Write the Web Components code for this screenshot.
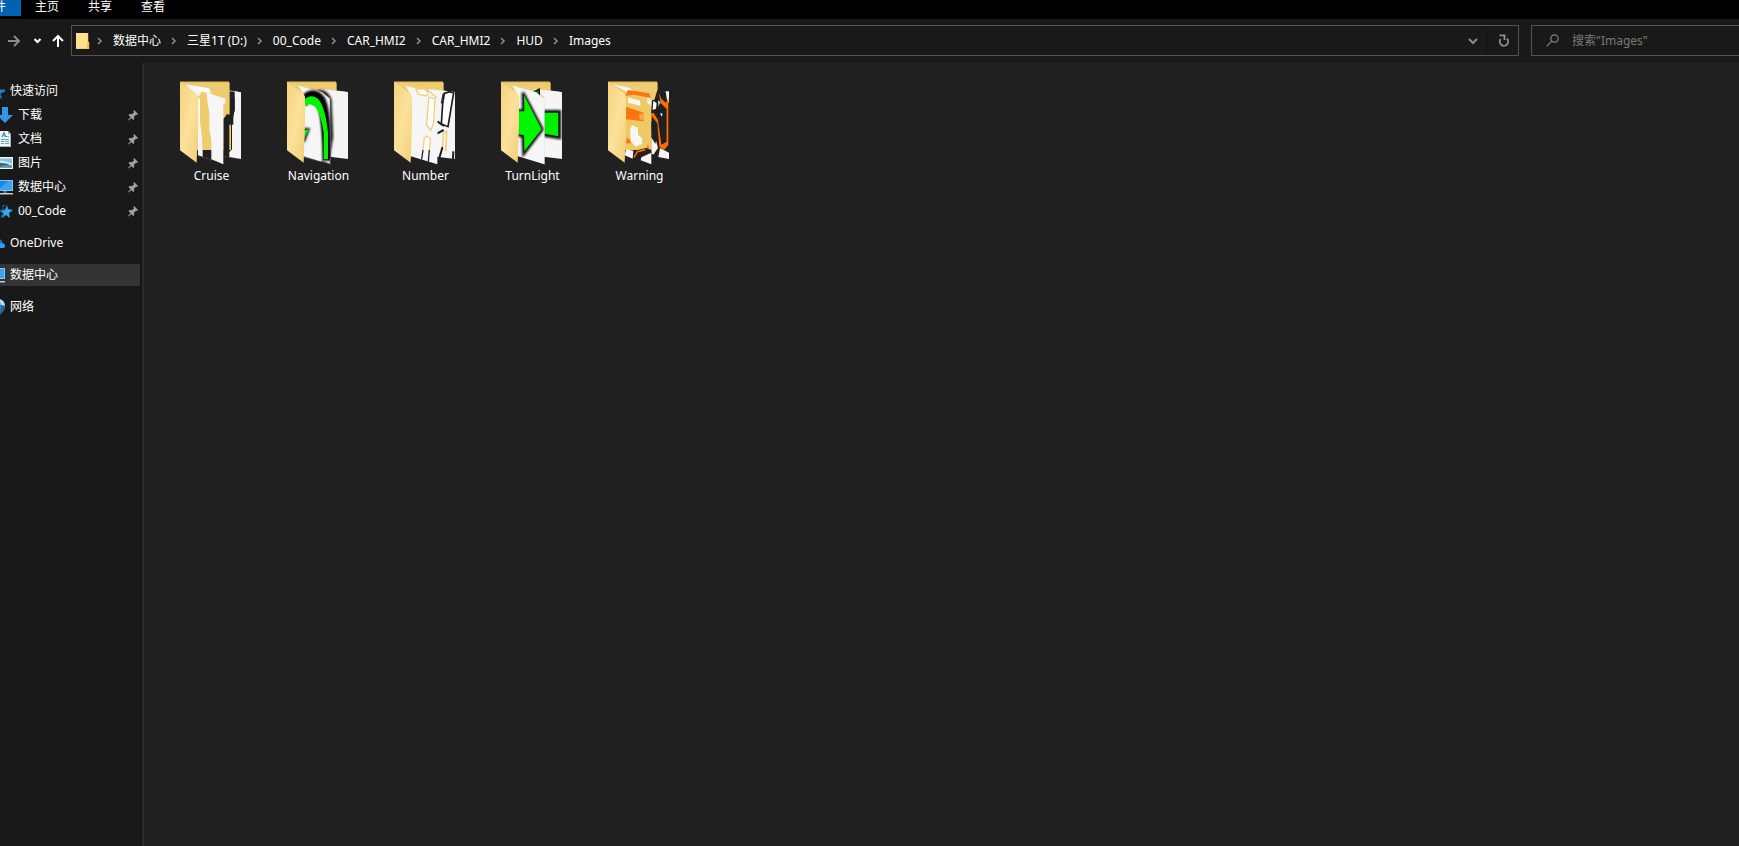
<!DOCTYPE html>
<html lang="zh-CN">
<head>
<meta charset="utf-8">
<title>Images</title>
<style>
  body {
    margin: 0;
    background: #191919;
    color: #fff;
    font-family: "Noto Sans", "Noto Sans CJK SC", sans-serif;
    font-size: 12px;
    line-height: 16px;
  }
</style>
</head>
<body>
<explorer-window>
  <ribbon-tabs slot="ribbon">
    <ribbon-tab active>文件</ribbon-tab>
    <ribbon-tab>主页</ribbon-tab>
    <ribbon-tab>共享</ribbon-tab>
    <ribbon-tab>查看</ribbon-tab>
  </ribbon-tabs>
  <address-bar slot="address">
    <path-crumb>数据中心</path-crumb>
    <path-crumb>三星1T (D:)</path-crumb>
    <path-crumb>00_Code</path-crumb>
    <path-crumb>CAR_HMI2</path-crumb>
    <path-crumb>CAR_HMI2</path-crumb>
    <path-crumb>HUD</path-crumb>
    <path-crumb>Images</path-crumb>
  </address-bar>
  <search-box slot="address" folder="Images"></search-box>
  <nav-group slot="side">
    <nav-item icon="star">快速访问</nav-item>
    <nav-item icon="download" pinned>下载</nav-item>
    <nav-item icon="document" pinned>文档</nav-item>
    <nav-item icon="picture" pinned>图片</nav-item>
    <nav-item icon="pc" pinned>数据中心</nav-item>
    <nav-item icon="codestar" pinned>00_Code</nav-item>
  </nav-group>
  <nav-group slot="side"><nav-item icon="cloud">OneDrive</nav-item></nav-group>
  <nav-group slot="side"><nav-item icon="pc" selected>数据中心</nav-item></nav-group>
  <nav-group slot="side"><nav-item icon="network">网络</nav-item></nav-group>
  <folder-tile art="cruise">Cruise</folder-tile>
  <folder-tile art="navigation">Navigation</folder-tile>
  <folder-tile art="number">Number</folder-tile>
  <folder-tile art="turnlight">TurnLight</folder-tile>
  <folder-tile art="warning">Warning</folder-tile>
</explorer-window>

<script>
const RESET = `
  button, a, input {
    font: inherit;
    color: inherit;
    background: none;
    border: 0;
    margin: 0;
    padding: 0;
    text-decoration: none;
    white-space: nowrap;
  }
  svg { display: block; flex: none; }
`;

class ExplorerWindow extends HTMLElement {
  constructor() {
    super();
    this.attachShadow({ mode: "open" });
  }
  connectedCallback() {
    this.shadowRoot.innerHTML = `
      <style>
        :host { display: flex; flex-direction: column; min-height: 100vh; overflow: hidden; }
        .address { display: flex; gap: 12px; padding: 6px 0 7px; }
        .body { display: flex; flex: 1; }
        aside { flex: none; width: 142px; padding-top: 16px; box-sizing: border-box; border-right: 1px solid #141414; }
        aside ::slotted(*) { margin-bottom: 8px; }
        main {
          flex: 1;
          display: flex;
          flex-wrap: wrap;
          align-content: flex-start;
          padding: 15px 14px;
          background: #202020;
          border-left: 2px solid #2b2b2b;
        }
      </style>
      <slot name="ribbon"></slot>
      <div class="address"><slot name="address"></slot></div>
      <div class="body">
        <aside><slot name="side"></slot></aside>
        <main><slot></slot></main>
      </div>`;
  }
}
customElements.define("explorer-window", ExplorerWindow);

class RibbonTabs extends HTMLElement {
  constructor() {
    super();
    this.attachShadow({ mode: "open" });
  }
  connectedCallback() {
    this.shadowRoot.innerHTML = `
      <style>
        :host { display: block; background: #000; padding-bottom: 3px; }
        nav { display: flex; margin-left: -32px; }
      </style>
      <nav><slot></slot></nav>`;
  }
}
customElements.define("ribbon-tabs", RibbonTabs);

class RibbonTab extends HTMLElement {
  constructor() {
    super();
    this.attachShadow({ mode: "open" });
  }
  connectedCallback() {
    this.shadowRoot.innerHTML = `
      <style>
        ${RESET}
        :host { display: block; }
        button { display: block; height: 16px; padding: 0 15px 3px 14px; line-height: 13px; }
        :host([active]) button { background: #0063b1; }
      </style>
      <button type="button"><slot></slot></button>`;
  }
}
customElements.define("ribbon-tab", RibbonTab);

class AddressBar extends HTMLElement {
  constructor() {
    super();
    this.attachShadow({ mode: "open" });
  }
  connectedCallback() {
    this.shadowRoot.innerHTML = `
      <style>
        ${RESET}
        :host { display: flex; flex: 1; min-width: 0; }
        .history { display: flex; align-items: center; flex: none; width: 71px; }
        .history button:nth-child(1) { margin-left: 7px; }
        .history button:nth-child(2) { margin-left: 13px; }
        .history button:nth-child(3) { margin-left: 11px; }
        .field {
          flex: 1;
          display: flex;
          align-items: center;
          height: 29px;
          border: 1px solid #535353;
        }
        .folder { margin: 0 0 0 4px; }
        .crumbs { display: flex; flex: 1; }
        .drop { margin-right: 9px; }
        .refresh { height: 100%; padding: 0 8px 0 10px; border-left: 1px solid #141414; }
      </style>
      <div class="history">
        <button type="button" aria-label="前进">
          <svg width="14" height="12" viewBox="0 0 14 12" fill="none" stroke="#8b8b8b" stroke-width="2"><path d="M1 6h11M7 1l5 5-5 5"/></svg>
        </button>
        <button type="button" aria-label="最近位置">
          <svg width="7" height="6" viewBox="0 0 7 6" fill="none" stroke="#fff" stroke-width="2"><path d="M.5 1l3 3 3-3"/></svg>
        </button>
        <button type="button" aria-label="上移">
          <svg width="12" height="14" viewBox="0 0 12 14" fill="none" stroke="#fff" stroke-width="2"><path d="M6 13V2M1 7l5-5 5 5"/></svg>
        </button>
      </div>
      <div class="field">
        <svg class="folder" width="14" height="16" viewBox="0 0 14 16">
          <path d="M0 0h12v9h1v7H0z" fill="#ffe08c"/>
          <path d="M12 0v10h-1v6h2V9h-1M0 15.5h12" fill="#eec35b" stroke="#eec35b" stroke-width=".5"/>
        </svg>
        <div class="crumbs"><slot></slot></div>
        <button class="drop" type="button" aria-label="以前的位置">
          <svg width="10" height="8" viewBox="0 0 10 8" fill="none" stroke="#8b8b8b" stroke-width="2"><path d="M1 2l4 4 4-4"/></svg>
        </button>
        <button class="refresh" type="button" aria-label="刷新">
          <svg width="12" height="13" viewBox="0 0 12 13" fill="none" stroke="#8f8f8f" stroke-width="1.800"><path d="M9 4.600A4.200 4.200 0 1 1 2.600 5M1.500 1.400H6.500V6"/></svg>
        </button>
      </div>`;
  }
}
customElements.define("address-bar", AddressBar);

class PathCrumb extends HTMLElement {
  constructor() {
    super();
    this.attachShadow({ mode: "open" });
  }
  connectedCallback() {
    this.shadowRoot.innerHTML = `
      <style>
        ${RESET}
        :host { display: flex; align-items: center; }
        svg { margin: 0 10px; }
        :host(:first-child) svg { margin-left: 7px; }
      </style>
      <svg width="6" height="8" viewBox="0 0 6 8" fill="none" stroke="#8b8b8b" stroke-width="1.600"><path d="M1 1l3 3-3 3"/></svg>
      <button type="button"><slot></slot></button>`;
  }
}
customElements.define("path-crumb", PathCrumb);

class SearchBox extends HTMLElement {
  constructor() {
    super();
    this.attachShadow({ mode: "open" });
  }
  connectedCallback() {
    this.shadowRoot.innerHTML = `
      <style>
        ${RESET}
        :host {
          display: flex;
          align-items: center;
          flex: none;
          width: 208px;
          box-sizing: border-box;
          height: 31px;
          padding-left: 14px;
          border: 1px solid #535353;
          border-right: 0;
        }
        input { flex: 1; min-width: 0; margin-left: 13px; outline: 0; }
        input::placeholder { color: #7a7a7a; opacity: 1; }
      </style>
      <svg width="13" height="13" viewBox="0 0 13 13" fill="none" stroke="#85818a" stroke-width="1.200"><circle cx="8.500" cy="4.500" r="3.700"/><path d="M5.800 7.200L.6 12.400"/></svg>
      <input type="text" aria-label="搜索">`;
    this.shadowRoot.querySelector("input").placeholder = `搜索"${this.getAttribute("folder")}"`;
  }
}
customElements.define("search-box", SearchBox);

class NavGroup extends HTMLElement {
  constructor() {
    super();
    this.attachShadow({ mode: "open" });
  }
  connectedCallback() {
    this.shadowRoot.innerHTML = `
      <style>
        :host { display: block; margin-left: -11px; }
      </style>
      <slot></slot>`;
  }
}
customElements.define("nav-group", NavGroup);

const NAV_ICONS = {
  star: `<path d="M8 1l2 5.500h6v2l-4.500 2L13 16l-5-3-5 3 1.500-5.500L0 6.500 6 6z" fill="#1483d8"/>`,
  download: `<path d="M5 0h6v8h5l-8 8-8-8h5z" fill="#2f96e8"/>`,
  document: `
    <path d="M1 0h10l3 3v13H1z" fill="#f4f6f8"/><path d="M11 0v3h3z" fill="#9aa5ad"/><path d="M1 15.500h12.500V3" fill="none" stroke="#a9b1b8"/>
    <path d="M5 6l2-4 1.500 4" fill="none" stroke="#368fc9" stroke-width="1.500"/>
    <path d="M9 5.500h3M4 8.500h8M4 10.500h3M8 10.500h4M4 12.500h3M8 12.500h4" stroke="#5ba5d3"/>`,
  picture: `
    <path d="M0 2h16v12H0z" fill="#f3f3f3"/><path d="M1 3.500h14v9H1z" fill="#83c5ea"/>
    <path d="M1 6q6-1 14 3v1H1z" fill="#d5edf7"/><path d="M1 8q7-1 14 3v1.500H1z" fill="#416f72"/><path d="M4 11l11-1v2.500H4z" fill="#6099bd"/>`,
  pc: `
    <path d="M0 1h16v11H0z" fill="#83c9f4"/><path d="M1 2h14v9H1z" fill="#1689e5"/><path d="M1 11L11 2h4v9z" fill="#39a4f3"/>
    <path d="M6 12h4v2H6z" fill="#4b6574"/><path d="M2 14h14v1.500H2z" fill="#c5d1d8"/>`,
  codestar: `
    <path d="M10 2l1 4 5 1-4 3 1 5-4-3-4 3 1-5-3-2 5-1z" fill="#39a5f5"/>
    <path d="M5 4l3-2M3 8l4-2M4 14l3-3" stroke="#126ab3" stroke-width="1.500"/>`,
  cloud: `<path d="M3 13a3 3 0 0 1-1-5 5 5 0 0 1 8-4c4 1 3 4 4 4 2 1 2 5 0 5z" fill="#1773c6"/><path d="M6 13l6-5c5 0 5 5 2 5z" fill="#2f9ced"/>`,
  network: `
    <circle cx="9" cy="7" r="7" fill="#2d8fd5"/><path d="M10 0a7 7 0 0 1 6 7l-4-1z" fill="#b3dced"/>
    <path d="M12 6l4 1q-1 6-5 9z" fill="#2465a2"/>`
};

class NavItem extends HTMLElement {
  constructor() {
    super();
    this.attachShadow({ mode: "open" });
  }
  connectedCallback() {
    const pin = `
      <svg class="pin" width="10" height="11" viewBox="0 0 10 11"><path d="M6 0l4 4-1 1-1-.2-2 2 .2 2.200-1 1-2-2L.5 10.500 0 10l2.500-3L.5 5l1-1 2.500.2 2-2L5.300 1z" fill="#9ba3aa"/></svg>`;
    this.shadowRoot.innerHTML = `
      <style>
        ${RESET}
        :host { display: block; padding: 1px 0; }
        a { display: flex; align-items: center; gap: 5px; height: 22px; margin-right: 1px; }
        :host([pinned]) a { padding-left: 8px; }
        :host([selected]) a { background: #333; }
        .pin { margin: 0 2px 0 auto; }
      </style>
      <a href="#">
        <svg width="16" height="16" viewBox="0 0 16 16">${NAV_ICONS[this.getAttribute("icon")]}</svg>
        <span><slot></slot></span>
        ${this.hasAttribute("pinned") ? pin : ""}
      </a>`;
  }
}
customElements.define("nav-item", NavItem);

const REAR = `<path d="M130 57L213 66V267L158 260V80z" fill="#f5f5f6"/>`;
const SHEET = `<path d="M64 47L135 66 160 87V283L78 258V70z" fill="#f6f6f7"/>`;
const EDGE = `<path d="M48 44L130 57 205 66" fill="none" stroke="#d8d4c8" stroke-width="2"/>`;

// what sticks out of each folder, drawn between its back and its front flap
const FOLDER_ART = {
  cruise: `
    <path d="M30 240V270H178V240z" fill="#202020"/>
    <path d="M194 64L213 67V267L178 261V246L186 238V160L194 120z" fill="#f5f5f6"/>
    <path d="M186 84L194 82V122L190 132V164H184V238L174 246V262L160 260V148L171 132 180 134z" fill="#202020"/>
    <path d="M178 164h5v76h-5z" fill="#efca62"/>
    <path d="M46 43L112 55 124 70 96 66 84 82V256L98 260V206L90 150V86z" fill="#f6f6f7"/>
    <path d="M84 82L96 66 112 70 118 140 124 240H98L96 206 90 150V86z" fill="#efcb6b"/>
    <path d="M66 48L118 55 122 68 100 66z" fill="#fff"/>
    <path d="M110 67L158 84H166V100L160 102V283L124 268V210L118 180V130L112 94z" fill="#f6f6f7"/>
    <path d="M118 56L192 64M84 256L130 272M164 260L210 266" fill="none" stroke="#aaa28a" stroke-dasharray="8 4"/>`,
  navigation: `
    ${REAR}
    <path d="M122 60Q150 56 164 88L169 200 155 283V94z" fill="#222" filter="url(#soft)"/>
    <path d="M124 66h10l10 16-16-7z" fill="#00ef00"/>
    ${SHEET}
    <path d="M76 100Q104 58 130 90 148 120 149 272" fill="none" stroke="#000" stroke-width="30" filter="url(#soft)"/>
    <path d="M76 170L102 174 84 220z" fill="#000" filter="url(#soft)"/>
    <path d="M80 258V140Q98 106 118 128 134 160 134 272z" fill="#f6f6f7" filter="url(#soft)"/>
    <path d="M76 174L100 174 84 216 76 216z" fill="#222" filter="url(#soft)"/>
    <path d="M80 90Q104 68 126 90 145 114 153 188V267H140V190Q132 130 114 110 95 94 80 112zM80 182L96 178 80 207z" fill="#00f500"/>
    <path d="M160 86V283L134 273" fill="none" stroke="#444" stroke-width="3"/>
    <path d="M64 47L135 66 160 87V40H64z" fill="none"/>`,
  number: `
    ${REAR}
    <g fill="#fff" stroke="#1d1d1d" stroke-width="5">
      <path d="M181 70L197 65 209 69 204 98 192 170 172 162 176 102z"/>
      <path d="M160 154L180 168M160 190L179 180M166 263L176 230M207 267L208 244" stroke-width="6"/>
      <path d="M176 230L178 190 188 184 185 244" stroke="#f4ce75"/>
    </g>
    ${SHEET}
    <path d="M96 58L104 73 128 78 132 66 120 56z" fill="#fff" stroke="#f4ce75" stroke-width="4"/>
    <path d="M134 82L153 86 149 158 140 182 128 164zM117 240L121 204 130 198 140 206 136 240" fill="#fff" stroke="#f4ce75" stroke-width="4"/>
    <path d="M117 240L113 268M136 240L133 275M178 70L172 100" fill="none" stroke="#222" stroke-width="4"/>`,
  turnlight: `
    ${REAR}
    <path d="M158 124H206V204L158 196z" fill="#111" stroke="#111" stroke-width="8" filter="url(#soft)"/>
    <path d="M160 128H202V199L160 191z" fill="#00ef00"/>
    <path d="M125 67L145 57V82z" fill="#080" stroke="#111" stroke-width="4"/>
    ${SHEET}
    <path d="M80 122H97L96 68 154 178 98 252 96 199 80 195z" fill="#111" stroke="#111" stroke-width="8" filter="url(#soft)"/>
    <path d="M80 124H100L99 76 152 178 100 244 99 196 80 192z" fill="#00f500"/>
    <path d="M160 87V283" stroke="#e4e4e4" stroke-width="2"/>`,
  warning: `
    <path d="M178 60L213 66V267L160 260V120z" fill="#202020"/>
    <path d="M203 64h10v36l-6-10zM180 90l8 8-6 12zM160 184l8 6 12 44-14 20-6-4zM186 234l27 14v19l-32-6z" fill="#f5f5f6"/>
    <path d="M182 68L190 86 204 98 211 84V225L198 240 184 230 178 160 160 137 164 124 180 150 190 224 205 216V116L188 100z" fill="#ff6b00"/>
    <path d="M184 100L190 102 205 118V214L192 222 184 160z" fill="#202020"/>
    <path d="M64 47L135 66 160 87V240H80V70z" fill="#efc966"/>
    <path d="M44 43L96 54 108 66 82 64zM90 82L126 92 128 108 90 98zM102 165L120 174 120 194 132 204 133 222 112 230 98 212 96 180zM148 78L160 90V108L148 98z" fill="#f8f7f2"/>
    <path d="M90 60L154 70 158 84 108 74 82 78zM84 110L138 128 136 154 84 148zM86 204L94 206 100 220 84 220zM145 236L150 222 154 240z" fill="#ff7410"/>
    <path d="M124 132L138 130 136 150 124 148z" fill="#f2ae45"/>
    <path d="M110 242L144 234 160 240V282L106 267z" fill="#252019"/>
    <path d="M84 238L106 242 104 266 80 256zM130 262L160 248V283L128 271z" fill="#f7f7f7"/>
    <path d="M108 262L118 245 142 239" fill="none" stroke="#ff6b00" stroke-width="5"/>
    <path d="M162 90h18l-2 28-7 11h-11zM160 156h8v28l8 18-4 20-12-20z" fill="#202020"/>
    <path d="M166 92l10 8-2 16-10 4zM187 128l7 4-4 8z" fill="#fff"/>`
};

class FolderTile extends HTMLElement {
  constructor() {
    super();
    this.attachShadow({ mode: "open" });
  }
  connectedCallback() {
    this.shadowRoot.innerHTML = `
      <style>
        ${RESET}
        :host { display: block; width: 107px; }
        button { display: flex; flex-direction: column; align-items: center; gap: 2px; width: 100%; }
        span { line-height: 18px; }
      </style>
      <button type="button">
        <svg width="71" height="87" viewBox="18 24 213 261">
          <defs>
            <linearGradient id="flap" x2="1" y2="1">
              <stop stop-color="#f5d27c"/><stop offset=".5" stop-color="#fde19b"/><stop offset="1" stop-color="#f1cf76"/>
            </linearGradient>
            <filter id="soft"><feGaussianBlur stdDeviation="3"/></filter>
          </defs>
          <path d="M30 35H176L179 39V240H30z" fill="#efcb6b"/>
          <path d="M30 36H177" stroke="#d9b04d" stroke-width="2"/>
          ${EDGE}
          ${FOLDER_ART[this.getAttribute("art")]}
          <path d="M30 36L80 71 84 80V160L80 278 30 241z" fill="url(#flap)"/>
        </svg>
        <span><slot></slot></span>
      </button>`;
  }
}
customElements.define("folder-tile", FolderTile);
</script>
</body>
</html>
